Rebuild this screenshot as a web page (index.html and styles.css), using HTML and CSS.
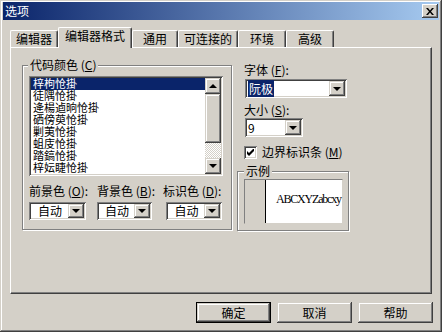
FILE: index.html
```html
<!DOCTYPE html>
<html lang="zh-CN">
<head>
    <meta charset="UTF-8">
    <title>选项</title>
    <link rel="stylesheet" href="styles.css">
</head>
<body>
    <div class="window">
        <div class="titlebar">
            <span class="title">选项</span>
            <div class="close">
                <svg width="8" height="7" viewBox="0 0 8 7"><path d="M0 0h2l2 2.5 2-2.5h2l-3 3.5 3 3.5h-2l-2-2.5-2 2.5h-2l3-3.5z" fill="#000"/></svg>
            </div>
        </div>

        <div class="tabs">
            <div class="tab w48">编辑器</div>
            <div class="tab active">编辑器格式</div>
            <div class="tab w46">通用</div>
            <div class="tab w60">可连接的</div>
            <div class="tab w48">环境</div>
            <div class="tab w48">高级</div>
        </div>

        <div class="panel">
            <fieldset class="group colors">
                <legend>代码颜色 (<u>C</u>)</legend>
                <div class="listbox">
                    <ul class="items">
                        <li class="selected">梓枸怆掛</li>
                        <li>徒隅怆掛</li>
                        <li>逄楊逌晌怆掛</li>
                        <li>硒傍萸怆掛</li>
                        <li>剿荑怆掛</li>
                        <li>蛆庋怆掛</li>
                        <li>踏鎬怆掛</li>
                        <li>梓妘睫怆掛</li>
                    </ul>
                    <div class="scrollbar">
                        <div class="raised arrow-btn"><span class="tri-up"></span></div>
                        <div class="raised thumb"></div>
                        <div class="track"></div>
                        <div class="raised arrow-btn"><span class="tri-down"></span></div>
                    </div>
                </div>
                <div class="pickers">
                    <div class="picker">
                        <div class="label">前景色 (<u>O</u>):</div>
                        <div class="combo c1"><span class="value center">自动</span><span class="raised drop"><span class="tri-down"></span></span></div>
                    </div>
                    <div class="picker">
                        <div class="label">背景色 (<u>B</u>):</div>
                        <div class="combo c2"><span class="value center">自动</span><span class="raised drop"><span class="tri-down"></span></span></div>
                    </div>
                    <div class="picker">
                        <div class="label">标识色 (<u>D</u>):</div>
                        <div class="combo c3"><span class="value center">自动</span><span class="raised drop"><span class="tri-down"></span></span></div>
                    </div>
                </div>
            </fieldset>

            <div class="side">
                <div class="label">字体 (<u>F</u>):</div>
                <div class="combo font"><span class="value"><span class="hl">阮极</span></span><span class="raised drop"><span class="tri-down"></span></span></div>
                <div class="label gap">大小 (<u>S</u>):</div>
                <div class="combo size"><span class="value">9</span><span class="raised drop"><span class="tri-down"></span></span></div>
                <div class="check">
                    <span class="box">
                        <svg width="7" height="7" viewBox="0 0 7 7"><path d="M0 2v3l2 2 5-5v-3l-5 5z" fill="#000"/></svg>
                    </span>
                    <span>边界标识条 (<u>M</u>)</span>
                </div>
                <fieldset class="group sample">
                    <legend>示例</legend>
                    <div class="preview">
                        <div class="gutter"></div>
                        <div class="sample-text">ABCXYZabcxy</div>
                    </div>
                </fieldset>
            </div>
        </div>

        <div class="buttons">
            <div class="btn default"><span class="raised inner">确定</span></div>
            <div class="btn raised">取消</div>
            <div class="btn raised">帮助</div>
        </div>
    </div>
</body>
</html>
```

FILE: styles.css
```css
body {
    margin: 0;
    font-family: "Noto Sans CJK SC", "Noto Sans", sans-serif;
    font-size: 12px;
    color: #000;
}
u {
    text-decoration: underline;
    text-underline-offset: 1px;
}
.window {
    width: 442px;
    height: 332px;
    box-sizing: border-box;
    padding: 2px 3px 3px;
    background: #d4d0c8;
    box-shadow: inset -1px -1px 0 #404040, inset 1px 1px 0 #d4d0c8,
                inset -2px -2px 0 #808080, inset 2px 2px 0 #fff;
}
.raised {
    background: #d4d0c8;
    box-shadow: inset -1px -1px 0 #404040, inset 1px 1px 0 #d4d0c8,
                inset -2px -2px 0 #808080, inset 2px 2px 0 #fff;
}

/* title bar */
.titlebar {
    height: 18px;
    display: flex;
    align-items: center;
    justify-content: space-between;
    padding: 0 1px 0 2px;
    background: linear-gradient(to right, #0a246a, #a6caf0);
    color: #fff;
    line-height: 18px;
}
.close {
    width: 16px;
    height: 14px;
    display: flex;
    align-items: center;
    justify-content: center;
    background: #d4d0c8;
    box-shadow: inset -1px -1px 0 #404040, inset 1px 1px 0 #fff,
                inset -2px -2px 0 #808080;
}

/* tabs */
.tabs {
    display: flex;
    align-items: flex-end;
    height: 20px;
    margin: 7px 0 0 7px;
    position: relative;
    z-index: 1;
}
.tab {
    height: 17px;
    box-sizing: border-box;
    border-top: 1px solid #fff;
    border-left: 1px solid #fff;
    border-right: 1px solid #404040;
    border-radius: 2px 2px 0 0;
    box-shadow: inset -1px 0 0 #808080;
    background: #d4d0c8;
    text-align: center;
    line-height: 16px;
}
.w46 { width: 46px; }
.w48 { width: 48px; }
.w60 { width: 60px; }
.tab.active {
    width: 74px;
    height: 21px;
    margin-bottom: -1px;
    line-height: 16px;
}

/* panel */
.panel {
    width: 422px;
    height: 247px;
    box-sizing: border-box;
    margin-left: 7px;
    padding: 10px 0 0 11px;
    border-top: 1px solid #fff;
    border-left: 1px solid #fff;
    border-right: 1px solid #404040;
    border-bottom: 1px solid #404040;
    box-shadow: inset -1px -1px 0 #808080;
    display: flex;
    align-items: flex-start;
}
.group {
    margin: 0;
    min-width: 0;
    box-sizing: border-box;
    border: 1px solid #808080;
    box-shadow: inset 1px 1px 0 #fff, 1px 1px 0 #fff;
}
.group legend {
    padding: 0 2px;
    margin-left: 0;
    line-height: 14px;
    background: #d4d0c8;
}
.colors {
    width: 210px;
    padding: 4px 6px 9px;
}
.colors legend {
    margin-left: -1px;
}

/* list */
.listbox {
    width: 194px;
    height: 100px;
    box-sizing: border-box;
    padding: 2px;
    display: flex;
    background: #fff;
    box-shadow: inset 1px 1px 0 #808080, inset -1px -1px 0 #fff,
                inset 2px 2px 0 #404040, inset -2px -2px 0 #d4d0c8;
}
.items {
    flex: 1;
    list-style: none;
    margin: 0;
    padding: 0;
    overflow: hidden;
}
.items li {
    height: 12px;
    line-height: 12px;
    font-family: "Liberation Sans", "Noto Sans CJK SC", sans-serif;
    font-size: 11px;
    padding-left: 2px;
    white-space: nowrap;
}
.items li.selected {
    background: #0a246a;
    color: #fff;
}
.scrollbar {
    width: 16px;
    display: flex;
    flex-direction: column;
}
.arrow-btn {
    height: 16px;
    display: flex;
    align-items: center;
    justify-content: center;
}
.thumb {
    height: 49px;
}
.track {
    flex: 1;
    background: repeating-conic-gradient(#fff 0 25%, #d4d0c8 0 50%) 0 0 / 2px 2px;
}
.tri-up, .tri-down {
    width: 0;
    height: 0;
    border-left: 4px solid transparent;
    border-right: 4px solid transparent;
}
.tri-up { border-bottom: 4px solid #000; }
.tri-down { border-top: 4px solid #000; }

/* colour pickers */
.pickers {
    display: grid;
    grid-template-columns: 57px 55px 59px;
    column-gap: 11px;
    margin-top: 8px;
}
.label {
    line-height: 14px;
    white-space: nowrap;
}
.combo {
    height: 18px;
    box-sizing: border-box;
    padding: 2px;
    display: flex;
    background: #fff;
    box-shadow: inset 1px 1px 0 #808080, inset -1px -1px 0 #fff,
                inset 2px 2px 0 #404040, inset -2px -2px 0 #d4d0c8;
}
.pickers .combo {
    margin-top: 4px;
}
.c1 { width: 57px; }
.c2 { width: 55px; }
.c3 { width: 56px; margin-left: 3px; }
.value {
    flex: 1;
    line-height: 14px;
    padding-left: 1px;
    white-space: nowrap;
}
.value.center {
    text-align: center;
}
.drop {
    width: 16px;
    display: flex;
    align-items: center;
    justify-content: center;
}

/* right column */
.side {
    width: 112px;
    margin-left: 5px;
    padding-top: 5px;
}
.side > .label,
.side > .combo,
.side > .check {
    margin-left: 7px;
}
.combo.font {
    width: 102px;
    height: 19px;
    margin-left: 8px;
    margin-top: 2px;
}
.combo.font .value,
.combo.size .value {
    line-height: 15px;
}
.hl {
    background: #0a246a;
    color: #fff;
    padding: 0 1px;
}
.label.gap {
    margin-top: 5px;
}
.combo.size {
    width: 58px;
    height: 19px;
    margin-left: 8px;
    margin-top: 1px;
}
.check {
    display: flex;
    align-items: center;
    gap: 5px;
    margin-top: 8px;
    line-height: 14px;
}
.check .box {
    width: 13px;
    height: 13px;
    box-sizing: border-box;
    display: flex;
    align-items: center;
    justify-content: center;
    background: #fff;
    box-shadow: inset 1px 1px 0 #808080, inset -1px -1px 0 #fff,
                inset 2px 2px 0 #404040, inset -2px -2px 0 #d4d0c8;
}
.sample {
    width: 112px;
    margin-top: 5px;
    padding: 1px 6px 6px;
}
.preview {
    width: 99px;
    height: 45px;
    box-sizing: border-box;
    display: flex;
    background: #fff;
    border: 1px solid #808080;
    border-right-color: #d4d0c8;
    border-bottom-color: #d4d0c8;
}
.gutter {
    width: 20px;
    flex: none;
    background: #d4d0c8;
    border-right: 1px solid #000;
}
.sample-text {
    padding: 12px 0 0 10px;
    font-family: "Liberation Serif", serif;
    font-size: 12px;
    letter-spacing: -1.2px;
    line-height: 14px;
    white-space: nowrap;
}

/* bottom buttons */
.buttons {
    display: flex;
    justify-content: flex-end;
    gap: 6px;
    margin-top: 8px;
    padding-right: 6px;
}
.btn {
    width: 75px;
    height: 21px;
    box-sizing: border-box;
    display: flex;
    align-items: center;
    justify-content: center;
    line-height: 14px;
}
.btn.default {
    border: 1px solid #000;
}
.btn.default .inner {
    width: 100%;
    height: 100%;
    display: flex;
    align-items: center;
    justify-content: center;
}
```
